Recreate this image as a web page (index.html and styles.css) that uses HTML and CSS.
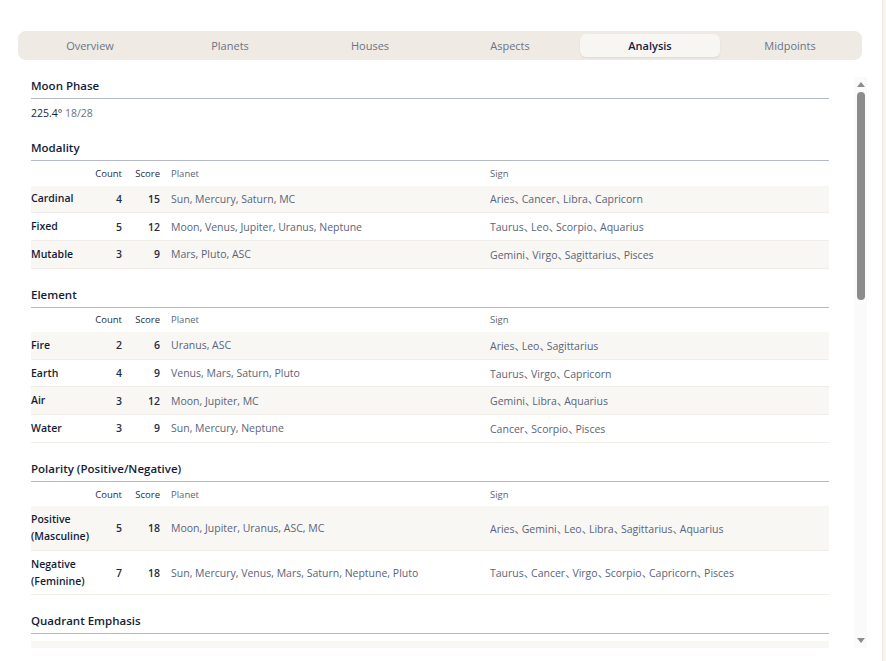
FILE: index.html
```html
<!DOCTYPE html>
<html>
<head>
<meta charset="utf-8">
<link rel="stylesheet" href="styles.css">
</head>
<body>
<div class="page">
  <main class="main">
    <nav class="tabs">
      <div class="tab">Overview</div>
      <div class="tab">Planets</div>
      <div class="tab">Houses</div>
      <div class="tab">Aspects</div>
      <div class="tab active">Analysis</div>
      <div class="tab">Midpoints</div>
    </nav>
    <div class="scroller">
      <div class="content">
        <section class="section first">
          <h2 class="title">Moon Phase</h2>
          <p class="phase">225.4° <span class="muted">18/28</span></p>
        </section>

        <section class="section">
          <h2 class="title">Modality</h2>
          <div class="table">
            <div class="row head"><span></span><span class="num">Count</span><span class="num">Score</span><span class="planet">Planet</span><span>Sign</span></div>
            <div class="row alt"><span class="label">Cardinal</span><span class="num">4</span><span class="num">15</span><span class="planet">Sun, Mercury, Saturn, MC</span><span class="sign">Aries<span class="sep">、</span>Cancer<span class="sep">、</span>Libra<span class="sep">、</span>Capricorn</span></div>
            <div class="row"><span class="label">Fixed</span><span class="num">5</span><span class="num">12</span><span class="planet">Moon, Venus, Jupiter, Uranus, Neptune</span><span class="sign">Taurus<span class="sep">、</span>Leo<span class="sep">、</span>Scorpio<span class="sep">、</span>Aquarius</span></div>
            <div class="row alt"><span class="label">Mutable</span><span class="num">3</span><span class="num">9</span><span class="planet">Mars, Pluto, ASC</span><span class="sign">Gemini<span class="sep">、</span>Virgo<span class="sep">、</span>Sagittarius<span class="sep">、</span>Pisces</span></div>
          </div>
        </section>

        <section class="section">
          <h2 class="title">Element</h2>
          <div class="table">
            <div class="row head"><span></span><span class="num">Count</span><span class="num">Score</span><span class="planet">Planet</span><span>Sign</span></div>
            <div class="row alt"><span class="label">Fire</span><span class="num">2</span><span class="num">6</span><span class="planet">Uranus, ASC</span><span class="sign">Aries<span class="sep">、</span>Leo<span class="sep">、</span>Sagittarius</span></div>
            <div class="row"><span class="label">Earth</span><span class="num">4</span><span class="num">9</span><span class="planet">Venus, Mars, Saturn, Pluto</span><span class="sign">Taurus<span class="sep">、</span>Virgo<span class="sep">、</span>Capricorn</span></div>
            <div class="row alt"><span class="label">Air</span><span class="num">3</span><span class="num">12</span><span class="planet">Moon, Jupiter, MC</span><span class="sign">Gemini<span class="sep">、</span>Libra<span class="sep">、</span>Aquarius</span></div>
            <div class="row"><span class="label">Water</span><span class="num">3</span><span class="num">9</span><span class="planet">Sun, Mercury, Neptune</span><span class="sign">Cancer<span class="sep">、</span>Scorpio<span class="sep">、</span>Pisces</span></div>
          </div>
        </section>

        <section class="section">
          <h2 class="title">Polarity (Positive/Negative)</h2>
          <div class="table">
            <div class="row head"><span></span><span class="num">Count</span><span class="num">Score</span><span class="planet">Planet</span><span>Sign</span></div>
            <div class="row alt tall"><span class="label">Positive (Masculine)</span><span class="num">5</span><span class="num">18</span><span class="planet">Moon, Jupiter, Uranus, ASC, MC</span><span class="sign">Aries<span class="sep">、</span>Gemini<span class="sep">、</span>Leo<span class="sep">、</span>Libra<span class="sep">、</span>Sagittarius<span class="sep">、</span>Aquarius</span></div>
            <div class="row tall"><span class="label">Negative (Feminine)</span><span class="num">7</span><span class="num">18</span><span class="planet">Sun, Mercury, Venus, Mars, Saturn, Neptune, Pluto</span><span class="sign">Taurus<span class="sep">、</span>Cancer<span class="sep">、</span>Virgo<span class="sep">、</span>Scorpio<span class="sep">、</span>Capricorn<span class="sep">、</span>Pisces</span></div>
          </div>
        </section>

        <section class="section">
          <h2 class="title">Quadrant Emphasis</h2>
          <div class="table quad">
            <div class="row alt"><span class="label nowrap">1st Quadrant</span><span class="num">3</span><span class="num">9</span><span class="planet">Sun, Mercury, Venus</span><span class="sign">House 1–3</span></div>
          </div>
        </section>
      </div>
      <div class="scrollbar">
        <div class="arrow up"></div>
        <div class="track"><div class="thumb"></div></div>
        <div class="arrow down"></div>
      </div>
    </div>
  </main>
  <aside class="edge"></aside>
</div>
</body>
</html>
```

FILE: styles.css
```css
* { box-sizing: border-box; }
html, body { margin: 0; padding: 0; }
body {
  background: #ffffff;
  font-family: "Open Sans", "Noto Sans", "Liberation Sans", "Noto Sans CJK JP", sans-serif;
  color: #18223f;
}
.page {
  display: flex;
  width: 886px;
  height: 661px;
  overflow: hidden;
}
.main {
  flex: 1;
  padding: 31px 0 0 18px;
}
.edge {
  width: 4px;
  background: #f6f2ec;
  border-left: 1px solid #efe9e1;
}
.tabs {
  width: 844px;
  height: 29px;
  background: #efebe4;
  border-radius: 8px;
  padding: 3px 2px;
  display: grid;
  grid-template-columns: repeat(6, 1fr);
}
.tab {
  display: flex;
  align-items: center;
  justify-content: center;
  font-size: 11px;
  color: #6b7385;
  border-radius: 6px;
}
.tab.active {
  background: #f8f6f2;
  color: #18223f;
  font-weight: 600;
  box-shadow: 0 1px 2px rgba(0,0,0,0.08);
}
.scroller {
  margin-top: 10px;
  height: 578px;
  display: flex;
  overflow: hidden;
}
.content {
  width: 824px;
  padding: 8px 13px 0 13px;
  overflow: hidden;
}
.section { margin-bottom: 18px; }
.section.first { margin-bottom: 19px; }
.title {
  margin: 0;
  font-size: 11.5px;
  font-weight: 600;
  line-height: 16px;
  padding-bottom: 4px;
  border-bottom: 1px solid #b3b9c9;
  color: #141d38;
}
.phase {
  margin: 6px 0 0 0;
  font-size: 10.5px;
  line-height: 16px;
  color: #18223f;
}
.muted { color: #6b7385; }
.table { display: flex; flex-direction: column; }
.row {
  display: grid;
  grid-template-columns: 64px 27px 38px 330px 1fr;
  align-items: center;
  height: 27.7px;
  border-bottom: 1px solid #f0ece8;
  font-size: 10.5px;
  color: #5a6479;
}
.row.head {
  height: 24.5px;
  border-bottom: none;
  font-size: 9.5px;
  color: #5b6577;
}
.row.alt { background: #f9f7f4; }
.row.tall { height: 44.5px; }
.label {
  font-weight: 600;
  color: #141d38;
  line-height: 17px;
  font-size: 10.5px;
}
.nowrap { white-space: nowrap; }
.num { text-align: right; color: #242d45; }
.row:not(.head) .num { font-weight: 600; }
.planet { padding-left: 11px; }
.sep {
  font-feature-settings: "halt" 1;
  margin-right: 2px;
}
.quad { margin-top: 7px; }
.scrollbar {
  margin-left: 12px;
  width: 13px;
  display: flex;
  flex-direction: column;
  align-items: center;
  background: #fafafa;
  margin-top: 7px;
}
.arrow {
  width: 0;
  height: 0;
  border-left: 4px solid transparent;
  border-right: 4px solid transparent;
}
.arrow.up { border-bottom: 5px solid #8c8c8c; margin-top: 5px; }
.arrow.down { border-top: 5px solid #8c8c8c; margin-bottom: 5px; }
.track {
  flex: 1;
  width: 100%;
  display: flex;
  justify-content: center;
  padding-top: 5px;
}
.thumb {
  width: 8px;
  height: 208px;
  background: #8c8c8c;
  border-radius: 4px;
}
```
